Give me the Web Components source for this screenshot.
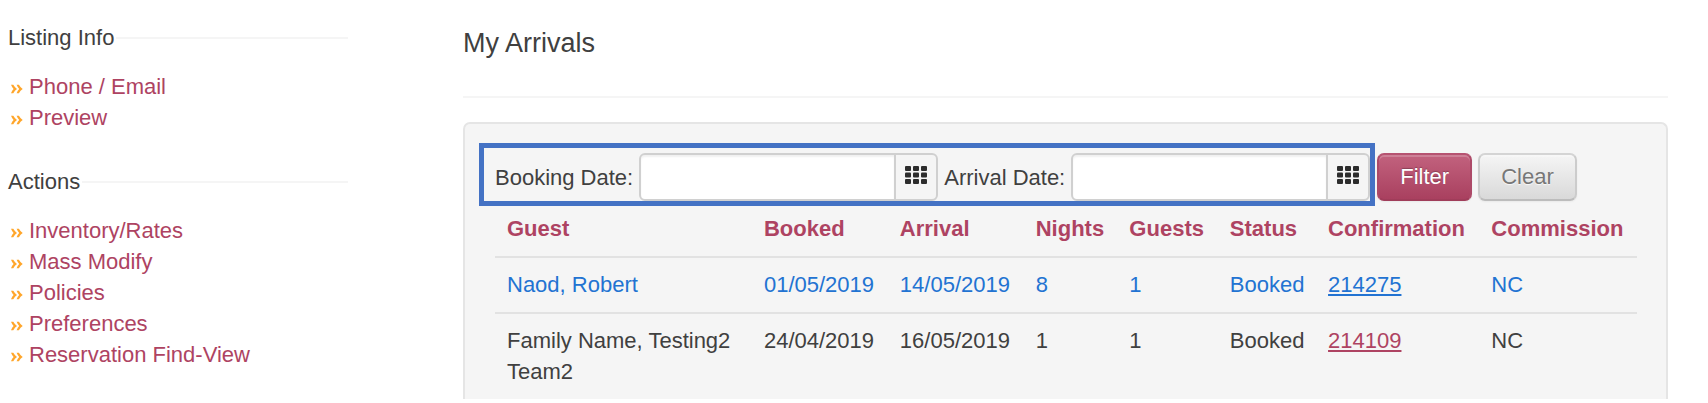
<!DOCTYPE html>
<html lang="en">
<head>
<meta charset="utf-8">
<title>My Arrivals</title>
<style>
  body {
    margin: 0;
    background: #fff;
    color: #404040;
    font: 22px/31px "Liberation Sans", Arial, sans-serif;
    --accent: #ae4362;
    --current: #2273d2;
    --rule: #f5f5f5;
  }
</style>
</head>
<body>
<arrivals-page>
  <side-nav slot="side">
    <nav-group heading="Listing Info">
      <nav-item href="#phone">Phone / Email</nav-item>
      <nav-item href="#preview">Preview</nav-item>
    </nav-group>
    <nav-group heading="Actions">
      <nav-item href="#inventory">Inventory/Rates</nav-item>
      <nav-item href="#modify">Mass Modify</nav-item>
      <nav-item href="#policies">Policies</nav-item>
      <nav-item href="#preferences">Preferences</nav-item>
      <nav-item href="#reservations">Reservation Find-View</nav-item>
    </nav-group>
  </side-nav>
  <page-title>My Arrivals</page-title>
  <content-panel>
    <filter-bar>
      <date-field slot="dates" label="Booking Date:"></date-field>
      <date-field slot="dates" label="Arrival Date:"></date-field>
      <action-button variant="primary">Filter</action-button>
      <action-button>Clear</action-button>
    </filter-bar>
    <arrivals-table></arrivals-table>
  </content-panel>
</arrivals-page>

<script>
const define = (name, html, setup) => {
  const template = document.createElement('template');
  template.innerHTML = html;
  customElements.define(name, class extends HTMLElement {
    constructor() {
      super();
      this.attachShadow({ mode: 'open' }).append(template.content.cloneNode(true));
    }
    connectedCallback() {
      if (setup) setup(this, this.shadowRoot);
    }
  });
};

define('arrivals-page', `
  <style>
    :host { display: grid; grid-template-columns: minmax(0, 340fr) minmax(0, 1205fr); column-gap: 115px; padding: 0 40px 0 8px; }
  </style>
  <aside><slot name="side"></slot></aside>
  <main><slot></slot></main>`);

define('side-nav', `
  <style>
    :host { display: block; padding-top: 22px; }
    nav { display: flex; flex-direction: column; gap: 33px; }
  </style>
  <nav aria-label="Listing"><slot></slot></nav>`);

define('nav-group', `
  <style>
    :host { display: block; }
    h2 { display: flex; align-items: center; gap: 2px; margin: 0 0 18px; font: inherit; }
    h2::after { content: ""; flex: 1; height: 2px; background: var(--rule); }
  </style>
  <h2></h2>
  <div role="list"><slot></slot></div>`,
  (host, root) => { root.querySelector('h2').textContent = host.getAttribute('heading'); });

define('nav-item', `
  <style>
    :host { display: flex; align-items: center; gap: 6px; padding-left: 3px; }
    svg { flex: none; margin-top: 4px; }
    a { color: var(--accent); text-decoration: none; }
    a:hover { text-decoration: underline; }
  </style>
  <svg width="12" height="10" viewBox="0 0 12 10" fill="#ffa62b" aria-hidden="true">
    <path d="M0 0.800H2.300Q3.800 3.500 6 5Q3.800 6.500 2.300 9.200H0Q1 6.600 2.600 5Q1 3.400 0 0.800ZM5.600 0.800H7.900Q9.400 3.500 11.700 5Q9.400 6.500 7.900 9.200H5.600Q6.600 6.600 8.200 5Q6.600 3.400 5.600 0.800Z"/>
  </svg>
  <a><slot></slot></a>`,
  (host, root) => {
    host.setAttribute('role', 'listitem');
    root.querySelector('a').href = host.getAttribute('href');
  });

define('page-title', `
  <style>
    :host { display: block; padding: 23px 0 33px; margin-bottom: 24px; border-bottom: 2px solid var(--rule); }
    h1 { margin: 0; font-size: 27px; line-height: 40px; font-weight: normal; }
  </style>
  <h1><slot></slot></h1>`);

define('content-panel', `
  <style>
    :host { display: block; padding: 19px 14px 0; background: #f5f5f5; border: 2px solid #e5e5e5; border-bottom: 0; border-radius: 7px 7px 0 0; }
  </style>
  <slot></slot>`);

define('filter-bar', `
  <style>
    :host { display: flex; align-items: flex-end; }
    .dates { display: flex; gap: 6px; min-width: 0; padding: 5px 0 0 11px; border: 5px solid #4472c4; }
    .actions { display: flex; gap: 6px; padding: 0 0 5px 2px; }
  </style>
  <div class="dates"><slot name="dates"></slot></div>
  <div class="actions"><slot></slot></div>`);

define('date-field', `
  <style>
    :host { display: flex; align-items: center; min-width: 0; }
    label { margin-right: 6px; white-space: nowrap; }
    input, button { box-sizing: border-box; height: 48px; border: 2px solid #d0d0d0; font: inherit; color: inherit; }
    input { width: 257px; min-width: 0; padding: 6px 10px; background: #fff; border-radius: 6px 0 0 6px; box-shadow: inset 0 2px 2px #0000000f; outline: none; }
    button { display: grid; justify-items: center; flex: none; width: 44px; margin-left: -2px; padding: 11px 0 0; background: #f5f5f5; border-radius: 0 6px 6px 0; }
  </style>
  <label for="date"></label>
  <input id="date" type="text">
  <button type="button" aria-label="Open calendar">
    <svg width="22" height="18" viewBox="0 0 22 18" fill="#2d2d2d" aria-hidden="true">
      <rect width="6" height="5" rx="1"/><rect x="8" width="6" height="5" rx="1"/><rect x="16" width="6" height="5" rx="1"/>
      <rect y="6.500" width="6" height="5" rx="1"/><rect x="8" y="6.500" width="6" height="5" rx="1"/><rect x="16" y="6.500" width="6" height="5" rx="1"/>
      <rect y="13" width="6" height="5" rx="1"/><rect x="8" y="13" width="6" height="5" rx="1"/><rect x="16" y="13" width="6" height="5" rx="1"/>
    </svg>
  </button>`,
  (host, root) => { root.querySelector('label').textContent = host.getAttribute('label'); });

define('action-button', `
  <style>
    :host { display: block; }
    button {
      height: 48px; padding: 0 21px 2px; border: 2px solid; border-color: #d4d4d4 #cccccc #bcbcbc; border-radius: 7px;
      background: linear-gradient(#f5f5f5, #d9d9d9); color: #777; font: inherit;
      text-shadow: 0 1px 1px #fffc; box-shadow: inset 0 2px 0 #fff3, 0 1px 2px #0000000d;
    }
    :host([variant="primary"]) button {
      border-color: #b65371 #ad4a68 #a03d5a; background: linear-gradient(#c2627e, #a9405f); color: #fff;
      text-shadow: 0 -1px 1px #0004;
    }
  </style>
  <button type="button"><slot></slot></button>`);

define('arrivals-table', `
  <style>
    :host { display: block; padding: 0 15px 0 16px; }
    table { width: 100%; table-layout: fixed; border-collapse: separate; border-spacing: 0; }
    th, td { padding: 11px 12px 12px; text-align: left; vertical-align: top; }
    th { padding-top: 7px; color: var(--accent); font-weight: bold; }
    td { border-top: 2px solid #e2e2e2; }
    tr > :nth-child(n+2) { padding-right: 0; }
    .current, .current a { color: var(--current); }
    a { color: var(--accent); text-underline-offset: 2px; }
  </style>
  <table>
    <colgroup>
      <col style="width:22.5%"><col style="width:11.9%"><col style="width:11.9%"><col style="width:8.2%">
      <col style="width:8.800%"><col style="width:8.600%"><col style="width:14.300%"><col>
    </colgroup>
    <thead>
      <tr><th>Guest</th><th>Booked</th><th>Arrival</th><th>Nights</th><th>Guests</th><th>Status</th><th>Confirmation</th><th>Commission</th></tr>
    </thead>
    <tbody>
      <tr class="current"><td>Naod, Robert</td><td>01/05/2019</td><td>14/05/2019</td><td>8</td><td>1</td><td>Booked</td><td><a href="#214275">214275</a></td><td>NC</td></tr>
      <tr><td>Family Name, Testing2 Team2</td><td>24/04/2019</td><td>16/05/2019</td><td>1</td><td>1</td><td>Booked</td><td><a href="#214109">214109</a></td><td>NC</td></tr>
    </tbody>
  </table>`);
</script>
</body>
</html>
